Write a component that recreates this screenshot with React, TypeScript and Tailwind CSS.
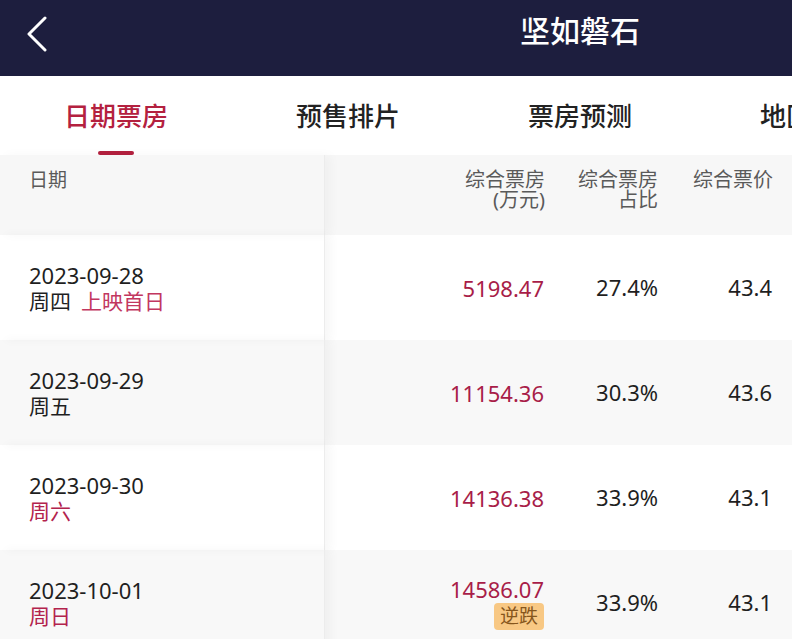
import React from 'react';

const tabs = ['日期票房', '预售排片', '票房预测', '地区分布'];

interface Row {
  date: string;
  week: string;
  weekRed?: boolean;
  tag?: string;
  total: string;
  share: string;
  price: string;
  badge?: string;
  gray?: boolean;
}

const rows: Row[] = [
  { date: '2023-09-28', week: '周四', tag: '上映首日', total: '5198.47', share: '27.4%', price: '43.4' },
  { date: '2023-09-29', week: '周五', total: '11154.36', share: '30.3%', price: '43.6', gray: true },
  { date: '2023-09-30', week: '周六', weekRed: true, total: '14136.38', share: '33.9%', price: '43.1' },
  { date: '2023-10-01', week: '周日', weekRed: true, total: '14586.07', share: '33.9%', price: '43.1', badge: '逆跌', gray: true },
];

const BackIcon = () => (
  <svg width="22" height="36" viewBox="0 0 22 36" fill="none">
    <path d="M19 2 L3 18 L19 34" stroke="white" strokeWidth="3" strokeLinecap="round" strokeLinejoin="round" />
  </svg>
);

const DataRow: React.FC<{ row: Row }> = ({ row }) => (
  <div className={`grid grid-cols-[325px_238px_113px_116px] h-[105px] ${row.gray ? 'bg-[#f8f8f8]' : 'bg-white'}`}>
    <div className="relative z-10 flex flex-col justify-center pl-[29px] border-r border-[#ececec] shadow-[6px_0_10px_rgba(0,0,0,0.035)] text-[22px] leading-[26px] text-[#1f1f1f]">
      <span>{row.date}</span>
      <span className="text-[21px]">
        <span className={row.weekRed ? 'text-[#b3234d]' : ''}>{row.week}</span>
        {row.tag && <span className="ml-[10px] text-[#c2375f]">{row.tag}</span>}
      </span>
    </div>
    <div className="flex flex-col items-end justify-center pr-[19px] text-[22px] leading-[26px] text-[#a81d48]">
      <span>{row.total}</span>
      {row.badge && (
        <span className="mt-[1px] px-[6px] h-[27px] leading-[27px] rounded-[4px] bg-[#f8c884] text-[#86561c] text-[19px]">
          {row.badge}
        </span>
      )}
    </div>
    <div className="flex items-center justify-end pr-[18px] text-[22px] text-[#1f1f1f]">{row.share}</div>
    <div className="flex items-center justify-end pr-[20px] text-[22px] text-[#1f1f1f]">{row.price}</div>
  </div>
);

export default function App() {
  return (
    <div
      className="w-[792px] h-[639px] overflow-hidden bg-white"
      style={{ fontFamily: '"Noto Sans", "Noto Sans CJK SC", sans-serif' }}
    >
      <header className="h-[76px] bg-[#1d1e3e] flex items-start">
        <div className="pl-[26px] pt-[16px]">
          <BackIcon />
        </div>
        <h1 className="ml-[472px] pt-[11px] text-[30px] leading-[40px] font-medium text-white whitespace-nowrap">坚如磐石</h1>
      </header>

      <nav className="h-[79px] flex overflow-hidden">
        {tabs.map((t, i) => (
          <div key={t} className="w-[232px] shrink-0 flex flex-col items-center pt-[22px]">
            <span className={`text-[26px] leading-[36px] font-medium whitespace-nowrap ${i === 0 ? 'text-[#b4213f]' : 'text-[#222]'}`}>
              {t}
            </span>
            {i === 0 && <span className="mt-[17px] w-[36px] h-[5px] rounded-full bg-[#b4213f]" />}
          </div>
        ))}
      </nav>

      <div className="grid grid-cols-[325px_238px_113px_116px] h-[80px] bg-[#f7f7f7] text-[20px] leading-[20px] text-[#5a5a5a]">
        <div className="relative z-10 pl-[29px] pt-[15px] text-[19px] border-r border-[#ececec] shadow-[6px_0_10px_rgba(0,0,0,0.03)]">日期</div>
        <div className="pt-[15px] pr-[18px] text-right">综合票房<br />(万元)</div>
        <div className="pt-[15px] pr-[18px] text-right">综合票房<br />占比</div>
        <div className="pt-[15px] pr-[19px] text-right">综合票价</div>
      </div>

      {rows.map((r) => (
        <DataRow key={r.date} row={r} />
      ))}
    </div>
  );
}
